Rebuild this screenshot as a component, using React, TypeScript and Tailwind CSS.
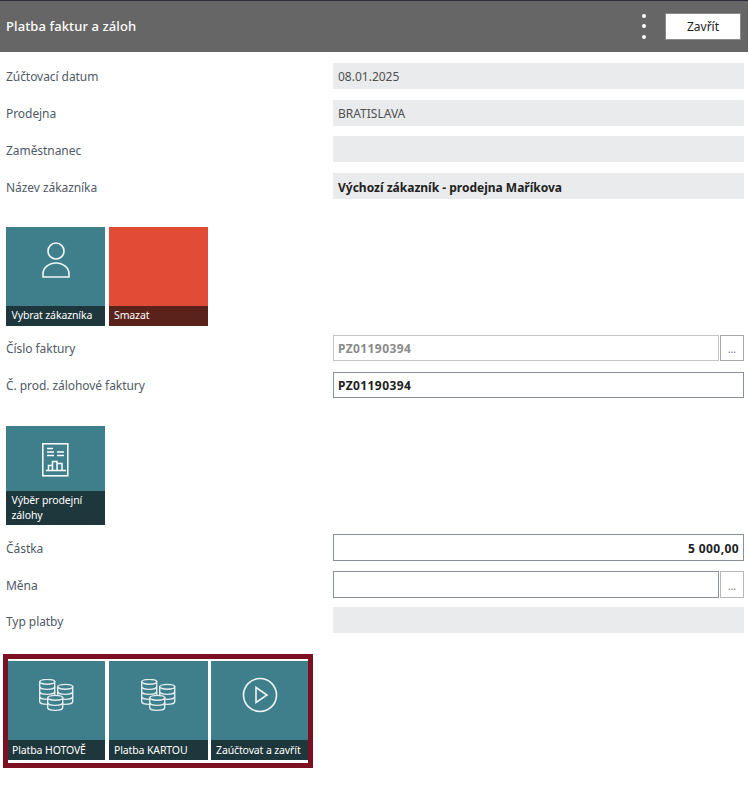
const font = "font-['Noto_Sans',sans-serif]";

function PersonIcon() {
  return (
    <svg width="30" height="38" viewBox="0 0 30 38" fill="none" stroke="#f0f5f6" strokeWidth="1.6">
      <circle cx="15" cy="10" r="8" />
      <path d="M2 36v-3a13 11 0 0 1 26 0v3z" />
    </svg>
  );
}

function ReportIcon() {
  return (
    <svg width="27" height="34" viewBox="0 0 27 34" fill="none" stroke="#ffffff" strokeWidth="1.5">
      <rect x=".8" y=".8" width="25" height="32" />
      <path d="M5 5.500h6M5 9h7M5 12.500h7M15 9h7M15 12.500h7" />
      <path d="M4 27.500h20M6.500 27.500v-5h4v5M10.500 27.500v-9h4.500v9M15 27.500v-7h5v7" />
    </svg>
  );
}

function Stack({ x, y, bands }: { x: number; y: number; bands: number }) {
  const h = bands * 5;
  return (
    <g transform={`translate(${x} ${y})`}>
      <path d={`M.7 2.800v${h}c0 1.400 3.400 2.600 7.500 2.600s7.500-1.200 7.500-2.600v-${h}z`} fill="#3f7f8c" />
      <ellipse cx="8.200" cy="2.800" rx="7.500" ry="2.400" fill="#3f7f8c" />
      {Array.from({ length: bands - 1 }, (_, i) => (
        <path key={i} d={`M.7 ${7.800 + i * 5}c0 1.400 3.400 2.600 7.500 2.600s7.500-1.200 7.500-2.600`} />
      ))}
    </g>
  );
}

function CoinsIcon() {
  return (
    <svg width="35" height="33" viewBox="0 0 35 33" fill="none" stroke="#e4edef" strokeWidth="1.4">
      <Stack x={0} y={0} bands={4} />
      <Stack x={18} y={5} bands={3} />
      <Stack x={8} y={16} bands={2} />
    </svg>
  );
}

function PlayIcon() {
  return (
    <svg width="36" height="36" viewBox="0 0 36 36" fill="none" stroke="#f0f5f6" strokeWidth="1.6">
      <circle cx="18" cy="18" r="16.500" />
      <path d="M14 10.500 25 18l-11 7.500z" />
    </svg>
  );
}

type TileProps = {
  label: string;
  icon?: React.ReactNode;
  red?: boolean;
  className?: string;
  iconClass?: string;
  stripClass?: string;
  tall?: boolean;
};

function Tile({ label, icon, red, className, iconClass, stripClass, tall }: TileProps) {
  return (
    <div className={`flex h-[99px] flex-col ${red ? "bg-[#e04c36]" : "bg-[#3f7f8c]"} ${className ?? "w-[99px]"}`}>
      <div className={`flex flex-1 items-start justify-center ${iconClass ?? "pt-[14px]"}`}>{icon}</div>
      <div
        className={`flex items-center pr-[5px] text-[10.5px] leading-[15px] tracking-[-0.12px] text-white ${stripClass ?? "pl-[5px]"} ${tall ? "h-[34px]" : "h-[20px] whitespace-nowrap"} ${red ? "bg-[#5a221a]" : "bg-[#1e373c]"}`}
      >
        {label}
      </div>
    </div>
  );
}

function Row({ label, children, h = "h-[26px]", mb = "mb-[11px]", low }: { label: string; children: React.ReactNode; h?: string; mb?: string; low?: boolean }) {
  return (
    <div className={`flex items-center ${h} ${mb}`}>
      <div className={`w-[327px] shrink-0 text-[12px] tracking-[-0.06px] text-[#505a66] ${low ? "pt-[4px]" : "pt-[2px]"}`}>{label}</div>
      <div className="flex h-full flex-1 gap-px">{children}</div>
    </div>
  );
}

function ReadOnly({ value, bold }: { value?: string; bold?: boolean }) {
  return (
    <div className={`flex h-full flex-1 items-center bg-[#eaebec] px-[5px] text-[12px] ${bold ? "pt-[4px] font-bold text-[#212121]" : "pt-[2px] text-[#505050]"}`}>
      {value}
    </div>
  );
}

function Input({ value, muted, right }: { value?: string; muted?: boolean; right?: boolean }) {
  return (
    <div
      className={`flex h-full flex-1 items-center border bg-white pt-[2px] pl-[4px] text-[12px] font-bold tracking-[0.4px] ${right ? "justify-end pr-[4px]" : "pr-[4px]"} ${muted ? "border-[#c4c4c4] text-[#8a8a8a]" : "border-[#8a919c] text-[#212121]"}`}
    >
      {value}
    </div>
  );
}

function Dots({ muted }: { muted?: boolean }) {
  return (
    <div className={`flex w-[24px] shrink-0 items-center justify-center border pt-[3px] text-[10px] ${muted ? "border-[#a8a8a8] text-[#606a80]" : "border-[#b8b8b8] text-[#707070]"}`}>
      ...
    </div>
  );
}

export default function App() {
  return (
    <div className={`${font} min-h-[805px] w-[749px] bg-white`}>
      <header className="mr-px flex h-[52px] items-center border-t border-[#2c2c38] bg-[#666666] pr-[7px] pl-[6px]">
        <h1 className="flex-1 text-[13px] font-medium tracking-[0.1px] text-white">Platba faktur a záloh</h1>
        <div className="mr-[19px] mb-px flex flex-col gap-[6.500px]">
          <span className="size-[4px] rounded-full bg-white" />
          <span className="size-[4px] rounded-full bg-white" />
          <span className="size-[4px] rounded-full bg-white" />
        </div>
        <button className="h-[27px] w-[76px] border border-[#8a8a8a] bg-white text-[12px] text-[#222]">Zavřít</button>
      </header>

      <main className="pt-[11px] pr-[5px] pl-[6px]">
        <Row label="Zúčtovací datum"><ReadOnly value="08.01.2025" /></Row>
        <Row label="Prodejna" mb="mb-[10px]"><ReadOnly value="BRATISLAVA" /></Row>
        <Row label="Zaměstnanec" low><ReadOnly /></Row>
        <Row label="Název zákazníka" mb="mb-[28px]" low><ReadOnly value="Výchozí zákazník - prodejna Maříkova" bold /></Row>

        <div className="mb-[9px] flex gap-[4px]">
          <Tile label="Vybrat zákazníka" icon={<PersonIcon />} stripClass="pb-[2px] pl-[5.500px]" />
          <Tile label="Smazat" red stripClass="pb-[2px] pl-[5px]" />
        </div>

        <Row label="Číslo faktury">
          <Input value="PZ01190394" muted />
          <Dots muted />
        </Row>
        <Row label="Č. prod. zálohové faktury" mb="mb-[28px]"><Input value="PZ01190394" /></Row>

        <div className="mb-[9px] flex">
          <Tile label="Výběr prodejní zálohy" icon={<ReportIcon />} iconClass="pt-[17px]" stripClass="pl-[5.500px]" tall />
        </div>

        <Row label="Částka" h="h-[27px]" mb="mb-[10px]"><Input value="5 000,00" right /></Row>
        <Row label="Měna" h="h-[27px]" mb="mb-[9px]">
          <Input />
          <Dots />
        </Row>
        <Row label="Typ platby" mb="mb-[21px]" low><ReadOnly /></Row>

        <div className="-ml-[3px] w-[310px] border-[5px] border-[#7d0f23] pt-[2px] pb-[3px]">
          <div className="flex">
            <Tile label="Platba HOTOVĚ" icon={<CoinsIcon />} iconClass="pt-[18px]" stripClass="pl-[4px]" className="w-[97px]" />
            <Tile label="Platba KARTOU" icon={<CoinsIcon />} iconClass="pt-[18px]" className="ml-[4px] w-[99px]" />
            <Tile label="Zaúčtovat a zavřít" icon={<PlayIcon />} iconClass="pt-[16px]" className="ml-[3px] w-[97px]" />
          </div>
        </div>
      </main>
    </div>
  );
}
